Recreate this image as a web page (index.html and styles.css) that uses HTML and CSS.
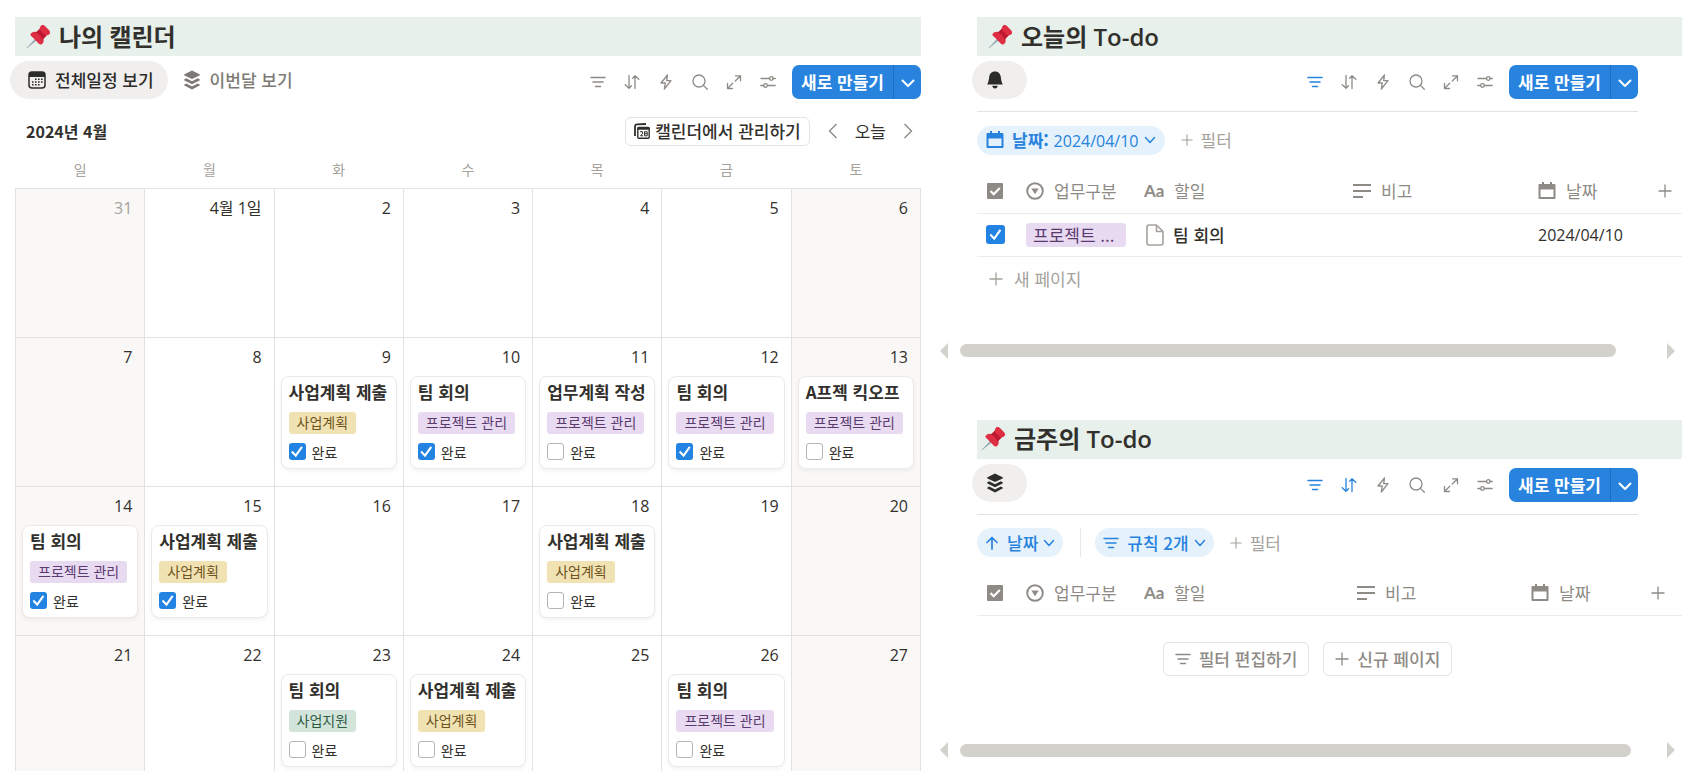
FILE: index.html
```html
<!doctype html>
<html lang="ko">
  <head>
    <meta charset="utf-8">
    <title>나의 캘린더</title>
    <meta name="viewport" content="width=device-width, initial-scale=1">
    <link rel="stylesheet" href="styles.css">
  </head>
  <body>
    <svg class="sprite" xmlns="http://www.w3.org/2000/svg">
      <symbol id="pin" viewBox="0 0 36 36">
        <path fill="#99aab5" d="M16.5 17.5l3.500 2.500L2.500 34 0.500 35.500l1.300-2.200z" />
        <path fill="#dd2e44" d="M21.500 3.500c1.800-4 5-3.500 7.500-1l5 5c2.500 2.500 2.700 6-1 7.500l-5.500 1.500 -8-7.500z" />
        <path fill="#dd2e44" d="M7 13c2.500-3.500 7-4 11-1.500l7 7c2.500 4 2 8.500-1.500 10.500-1.500.8-3 .2-4.500-1.300L8.300 17C6.800 15.500 6.200 14.200 7 13z" />
        <path fill="#be1931" d="M14.500 11.200l6.500-6 10 10.500-6 6.300c-1.500-4.500-5.500-9-10.500-10.800z" />
        <path fill="#dd2e44" d="M20.500 5.500l2-4.500c1.500-1.500 4-.8 6 1l5.500 5.500c2 2 2.500 4.500 1 6l-4.500 2c-4-1.500-8-5.500-10-10z" />
      </symbol>
      <symbol id="calendar-dots" viewBox="0 0 18 18">
        <rect x="1" y="1" width="16" height="16" rx="3" fill="none" stroke="currentColor" stroke-width="1.500" />
        <path fill="currentColor" d="M1 6V3.500A2.800 2.800 0 013.800 1h10.400A2.800 2.800 0 0117 3.500V6z" />
        <path stroke="currentColor" stroke-width="1.600" d="M7 8.200h1.600M10 8.200h1.600M13 8.200h1.600M4 11h1.600M7 11h1.600M10 11h1.600M13 11h1.600M4 13.800h1.600M7 13.800h1.600M10 13.800h1.600" />
      </symbol>
      <symbol id="layers" viewBox="0 0 18 20" fill="currentColor">
        <path d="M9 .5l7.500 3.700c.5.300.5.900 0 1.200L9 9 1.500 5.400c-.5-.3-.5-.9 0-1.200z" />
        <path d="M3.200 8.300L9 11.200l5.800-2.900 1.700.9c.5.300.5.900 0 1.200L9 14.200l-7.500-3.800c-.5-.3-.5-.9 0-1.200z" />
        <path d="M3.200 13.500L9 16.400l5.800-2.900 1.700.9c.5.300.5.900 0 1.200L9 19.400l-7.500-3.800c-.5-.3-.5-.9 0-1.200z" />
      </symbol>
      <symbol id="bell" viewBox="0 0 18 18" fill="currentColor">
        <path d="M9 .5c3.800 0 5.500 2.500 5.800 5.500.3 3.300 1 5.500 2 7.500H1.200c1-2 1.700-4.200 2-7.500C3.500 3 5.200.5 9 .5z" />
        <path d="M6.300 14.800h5.400C11.500 16.700 10.500 17.500 9 17.500s-2.500-.8-2.700-2.700z" />
      </symbol>
      <symbol id="filter" viewBox="0 0 16 16" fill="none" stroke="currentColor" stroke-width="1.500" stroke-linecap="round">
        <path d="M1 3.500h14M3 8h10M5.500 12.500h5" />
      </symbol>
      <symbol id="sort" viewBox="0 0 16 16" fill="none" stroke="currentColor" stroke-width="1.300" stroke-linecap="round" stroke-linejoin="round">
        <path d="M5 1.500v12.500M1.200 10.800L5 14.200l2.500-2.400M11 14.500V2M8.500 4.400L11 1.800l3.800 3.400" />
      </symbol>
      <symbol id="bolt" viewBox="0 0 16 16" fill="none" stroke="currentColor" stroke-width="1.300" stroke-linejoin="round">
        <path d="M9.500 1L3 9h4.300L6.300 15 13 6.700H8.700z" />
      </symbol>
      <symbol id="search" viewBox="0 0 16 16" fill="none" stroke="currentColor" stroke-width="1.300" stroke-linecap="round">
        <circle cx="7" cy="7" r="6" />
        <path d="M11.400 11.400L15.300 15.300" />
      </symbol>
      <symbol id="expand" viewBox="0 0 16 16" fill="none" stroke="currentColor" stroke-width="1.300" stroke-linecap="round" stroke-linejoin="round">
        <path d="M9.500 1.800h5v5M14.500 1.800L9.300 7M6.500 14.500h-5v-5M1.500 14.500L6.700 9.300" />
      </symbol>
      <symbol id="sliders" viewBox="0 0 16 16" fill="none" stroke="currentColor" stroke-width="1.300" stroke-linecap="round">
        <path d="M1 4.500h8.500M13 4.500h2.200M.8 11.500H3.500M7.500 11.500h7.700" />
        <circle cx="11.300" cy="4.500" r="1.800" />
        <circle cx="5.500" cy="11.500" r="1.800" />
      </symbol>
      <symbol id="chevron" viewBox="0 0 14 14" fill="none" stroke="currentColor" stroke-width="2" stroke-linecap="round" stroke-linejoin="round">
        <path d="M1.500 5.500L7 11l5.500-5.500" />
      </symbol>
      <symbol id="chevron-thin" viewBox="0 0 12 12" fill="none" stroke="currentColor" stroke-width="1.500" stroke-linecap="round" stroke-linejoin="round">
        <path d="M1.500 3.500L6 8.500l4.500-5" />
      </symbol>
      <symbol id="prev" viewBox="0 0 10 16" fill="none" stroke="currentColor" stroke-width="1.400">
        <path d="M8.500 1L1.500 8l7 7" />
      </symbol>
      <symbol id="next" viewBox="0 0 10 16" fill="none" stroke="currentColor" stroke-width="1.400">
        <path d="M1.500 1l7 7-7 7" />
      </symbol>
      <symbol id="calendar-stack" viewBox="0 0 16 16" fill="none" stroke="currentColor">
        <path stroke-width="1.800" d="M1 13V3a2 2 0 012-1.600L12 1" />
        <rect x="3.800" y="4.500" width="11.400" height="10.700" rx="1" stroke-width="1.400" />
        <path stroke-width="2.500" d="M3.500 5.500h12" />
        <path stroke-width="1" d="M6 8.700h2.500v2L6.500 12.800H9M10.500 8.700h2.700v4.100h-2.700zM10.500 10.700h2.700" />
      </symbol>
      <symbol id="calendar" viewBox="0 0 18 18" fill="currentColor">
        <path fill-rule="evenodd" d="M4 0h2v2h6V0h2v2h2.500a1 1 0 011 1v13a1 1 0 01-1 1h-15a1 1 0 01-1-1V3a1 1 0 011-1H4zM2.500 7.500V15h13V7.500z" />
      </symbol>
      <symbol id="plus" viewBox="0 0 14 14" fill="none" stroke="currentColor" stroke-width="1.300" stroke-linecap="round">
        <path d="M7 1v12M1 7h12" />
      </symbol>
      <symbol id="checkbox" viewBox="0 0 18 18">
        <rect x="1" y="1" width="16" height="16" rx="1" fill="currentColor" />
        <path fill="none" stroke="#fff" stroke-width="2.200" d="M4.500 9l3.200 3.200L13.800 6" />
      </symbol>
      <symbol id="select" viewBox="0 0 18 18">
        <circle cx="9" cy="9" r="7.800" fill="none" stroke="currentColor" stroke-width="1.900" />
        <path fill="currentColor" d="M5.300 6.500h7.400L9 12.300z" />
      </symbol>
      <symbol id="lines" viewBox="0 0 18 18" stroke="currentColor" stroke-width="2">
        <path d="M0 3h18M0 9h18M0 15h10" />
      </symbol>
      <symbol id="page" viewBox="0 0 18 22" fill="none" stroke="currentColor" stroke-width="1.600" stroke-linejoin="round">
        <path d="M3 1h7.500L17 7.500V19a2 2 0 01-2 2H3a2 2 0 01-2-2V3a2 2 0 012-2zM10.500 1v6.500H17" />
      </symbol>
      <symbol id="arrow-up" viewBox="0 0 14 14" fill="none" stroke="currentColor" stroke-width="1.700" stroke-linecap="round" stroke-linejoin="round">
        <path d="M7 13V1.500M2 6.500l5-5 5 5" />
      </symbol>
    </svg>

    <main class="board">
      <section class="column">
        <h2 class="title"><svg class="pin"><use href="#pin" /></svg>나의 캘린더</h2>
        <div class="toolbar">
          <div class="tabs">
            <button class="tab active"><svg class="icon-18"><use href="#calendar-dots" /></svg>전체일정 보기</button>
            <button class="tab"><svg class="icon-20"><use href="#layers" /></svg>이번달 보기</button>
          </div>
          <div class="tools">
            <button class="tool" aria-label="필터"><svg><use href="#filter" /></svg></button>
            <button class="tool" aria-label="정렬"><svg><use href="#sort" /></svg></button>
            <button class="tool" aria-label="자동화"><svg><use href="#bolt" /></svg></button>
            <button class="tool" aria-label="검색"><svg><use href="#search" /></svg></button>
            <button class="tool" aria-label="확장"><svg><use href="#expand" /></svg></button>
            <button class="tool" aria-label="설정"><svg><use href="#sliders" /></svg></button>
            <div class="new">
              <button class="new-main">새로 만들기</button>
              <button class="new-more" aria-label="더 보기"><svg><use href="#chevron" /></svg></button>
            </div>
          </div>
        </div>

        <div class="month">
          <h3>2024년 4월</h3>
          <button class="outline"><svg class="icon-16"><use href="#calendar-stack" /></svg>캘린더에서 관리하기</button>
          <button class="nav" aria-label="이전 달"><svg><use href="#prev" /></svg></button>
          <button class="today">오늘</button>
          <button class="nav" aria-label="다음 달"><svg><use href="#next" /></svg></button>
        </div>

        <table class="calendar">
          <thead>
            <tr><th>일</th><th>월</th><th>화</th><th>수</th><th>목</th><th>금</th><th>토</th></tr>
          </thead>
          <tbody>
            <tr>
              <td class="off"><time class="muted">31</time></td>
              <td><time>4월 1일</time></td>
              <td><time>2</time></td>
              <td><time>3</time></td>
              <td><time>4</time></td>
              <td><time>5</time></td>
              <td class="off"><time>6</time></td>
            </tr>
            <tr>
              <td class="off"><time>7</time></td>
              <td><time>8</time></td>
              <td>
                <time>9</time>
                <article class="card">
                  <h4>사업계획 제출</h4>
                  <span class="tag yellow">사업계획</span>
                  <label><input type="checkbox" checked>완료</label>
                </article>
              </td>
              <td>
                <time>10</time>
                <article class="card">
                  <h4>팀 회의</h4>
                  <span class="tag purple">프로젝트 관리</span>
                  <label><input type="checkbox" checked>완료</label>
                </article>
              </td>
              <td>
                <time>11</time>
                <article class="card">
                  <h4>업무계획 작성</h4>
                  <span class="tag purple">프로젝트 관리</span>
                  <label><input type="checkbox">완료</label>
                </article>
              </td>
              <td>
                <time>12</time>
                <article class="card">
                  <h4>팀 회의</h4>
                  <span class="tag purple">프로젝트 관리</span>
                  <label><input type="checkbox" checked>완료</label>
                </article>
              </td>
              <td class="off">
                <time>13</time>
                <article class="card">
                  <h4>A프젝 킥오프</h4>
                  <span class="tag purple">프로젝트 관리</span>
                  <label><input type="checkbox">완료</label>
                </article>
              </td>
            </tr>
            <tr>
              <td class="off">
                <time>14</time>
                <article class="card">
                  <h4>팀 회의</h4>
                  <span class="tag purple">프로젝트 관리</span>
                  <label><input type="checkbox" checked>완료</label>
                </article>
              </td>
              <td>
                <time>15</time>
                <article class="card">
                  <h4>사업계획 제출</h4>
                  <span class="tag yellow">사업계획</span>
                  <label><input type="checkbox" checked>완료</label>
                </article>
              </td>
              <td><time>16</time></td>
              <td><time>17</time></td>
              <td>
                <time>18</time>
                <article class="card">
                  <h4>사업계획 제출</h4>
                  <span class="tag yellow">사업계획</span>
                  <label><input type="checkbox">완료</label>
                </article>
              </td>
              <td><time>19</time></td>
              <td class="off"><time>20</time></td>
            </tr>
            <tr>
              <td class="off"><time>21</time></td>
              <td><time>22</time></td>
              <td>
                <time>23</time>
                <article class="card">
                  <h4>팀 회의</h4>
                  <span class="tag green">사업지원</span>
                  <label><input type="checkbox">완료</label>
                </article>
              </td>
              <td>
                <time>24</time>
                <article class="card">
                  <h4>사업계획 제출</h4>
                  <span class="tag yellow">사업계획</span>
                  <label><input type="checkbox">완료</label>
                </article>
              </td>
              <td><time>25</time></td>
              <td>
                <time>26</time>
                <article class="card">
                  <h4>팀 회의</h4>
                  <span class="tag purple">프로젝트 관리</span>
                  <label><input type="checkbox">완료</label>
                </article>
              </td>
              <td class="off"><time>27</time></td>
            </tr>
          </tbody>
        </table>
      </section>

      <div class="column">
        <section class="todo">
          <h2 class="title"><svg class="pin"><use href="#pin" /></svg>오늘의 To-do</h2>
          <div class="toolbar lined">
            <div class="tabs">
              <button class="tab active only-icon" aria-label="오늘"><svg class="icon-18"><use href="#bell" /></svg></button>
            </div>
            <div class="tools">
              <button class="tool on" aria-label="필터"><svg><use href="#filter" /></svg></button>
              <button class="tool" aria-label="정렬"><svg><use href="#sort" /></svg></button>
              <button class="tool" aria-label="자동화"><svg><use href="#bolt" /></svg></button>
              <button class="tool" aria-label="검색"><svg><use href="#search" /></svg></button>
              <button class="tool" aria-label="확장"><svg><use href="#expand" /></svg></button>
              <button class="tool" aria-label="설정"><svg><use href="#sliders" /></svg></button>
              <div class="new">
                <button class="new-main">새로 만들기</button>
                <button class="new-more" aria-label="더 보기"><svg><use href="#chevron" /></svg></button>
              </div>
            </div>
          </div>
          <div class="filters">
            <button class="pill"><svg class="icon-18"><use href="#calendar" /></svg><span><b>날짜:</b> <span class="num">2024/04/10</span></span><svg class="icon-12"><use href="#chevron-thin" /></svg></button>
            <button class="add"><svg class="icon-12"><use href="#plus" /></svg>필터</button>
          </div>
          <table class="list">
            <colgroup><col class="c-check"><col class="c-kind"><col><col class="c-note"><col class="c-date"><col class="c-plus"></colgroup>
            <thead>
              <tr>
                <th><div class="cell"><svg class="icon-18"><use href="#checkbox" /></svg></div></th>
                <th><div class="cell"><svg class="icon-18"><use href="#select" /></svg>업무구분</div></th>
                <th><div class="cell"><span class="aa">Aa</span>할일</div></th>
                <th><div class="cell"><svg class="icon-18"><use href="#lines" /></svg>비고</div></th>
                <th><div class="cell"><svg class="icon-18"><use href="#calendar" /></svg>날짜</div></th>
                <th><div class="cell"><svg class="icon-14"><use href="#plus" /></svg></div></th>
              </tr>
            </thead>
            <tbody>
              <tr>
                <td><div class="cell"><input type="checkbox" aria-label="완료" checked></div></td>
                <td><div class="cell"><span class="tag purple large">프로젝트 ...</span></div></td>
                <td><div class="cell name"><svg class="page"><use href="#page" /></svg>팀 회의</div></td>
                <td></td>
                <td><div class="cell num">2024/04/10</div></td>
                <td></td>
              </tr>
            </tbody>
          </table>
          <button class="add-row"><svg class="icon-14"><use href="#plus" /></svg>새 페이지</button>
          <div class="scroll first"><i class="left"></i><i class="thumb"></i><i class="right"></i></div>
        </section>

        <section class="todo">
          <h2 class="title tight"><svg class="pin"><use href="#pin" /></svg>금주의 To-do</h2>
          <div class="toolbar lined">
            <div class="tabs">
              <button class="tab active only-icon" aria-label="금주"><svg class="icon-20"><use href="#layers" /></svg></button>
            </div>
            <div class="tools">
              <button class="tool on" aria-label="필터"><svg><use href="#filter" /></svg></button>
              <button class="tool on" aria-label="정렬"><svg><use href="#sort" /></svg></button>
              <button class="tool" aria-label="자동화"><svg><use href="#bolt" /></svg></button>
              <button class="tool" aria-label="검색"><svg><use href="#search" /></svg></button>
              <button class="tool" aria-label="확장"><svg><use href="#expand" /></svg></button>
              <button class="tool" aria-label="설정"><svg><use href="#sliders" /></svg></button>
              <div class="new">
                <button class="new-main">새로 만들기</button>
                <button class="new-more" aria-label="더 보기"><svg><use href="#chevron" /></svg></button>
              </div>
            </div>
          </div>
          <div class="filters">
            <button class="pill compact"><svg class="icon-14"><use href="#arrow-up" /></svg>날짜<svg class="icon-12"><use href="#chevron-thin" /></svg></button>
            <span class="divider"></span>
            <button class="pill compact"><svg class="icon-16"><use href="#filter" /></svg>규칙 2개<svg class="icon-12"><use href="#chevron-thin" /></svg></button>
            <button class="add"><svg class="icon-12"><use href="#plus" /></svg>필터</button>
          </div>
          <table class="list week">
            <colgroup><col class="c-check"><col class="c-kind"><col><col class="c-note"><col class="c-date"><col class="c-plus"></colgroup>
            <thead>
              <tr>
                <th><div class="cell"><svg class="icon-18"><use href="#checkbox" /></svg></div></th>
                <th><div class="cell"><svg class="icon-18"><use href="#select" /></svg>업무구분</div></th>
                <th><div class="cell"><span class="aa">Aa</span>할일</div></th>
                <th><div class="cell"><svg class="icon-18"><use href="#lines" /></svg>비고</div></th>
                <th><div class="cell"><svg class="icon-18"><use href="#calendar" /></svg>날짜</div></th>
                <th><div class="cell"><svg class="icon-14"><use href="#plus" /></svg></div></th>
              </tr>
            </thead>
          </table>
          <div class="empty">
            <button class="outline tall"><svg class="icon-16"><use href="#filter" /></svg>필터 편집하기</button>
            <button class="outline tall"><svg class="icon-14"><use href="#plus" /></svg>신규 페이지</button>
          </div>
          <div class="scroll second"><i class="left"></i><i class="thumb"></i><i class="right"></i></div>
        </section>
      </div>
    </main>
  </body>
</html>
```

FILE: styles.css
```css
* {
  margin: 0;
  padding: 0;
  box-sizing: border-box;
}

html, body {
  height: 100%;
  overflow: hidden;
}

body {
  color: #32302c;
  background: #fff;
  font-family: "Noto Sans CJK KR", sans-serif;
  font-size: 17px;
  line-height: 24px;
}

button {
  display: flex;
  align-items: center;

  border: none;
  background: none;
  color: inherit;
  font: inherit;
  white-space: nowrap;
  cursor: pointer;
}

svg {
  display: block;
  flex: none;
}

.sprite {
  position: absolute;
  width: 0;
  height: 0;
}

.icon-12 { width: 12px; height: 12px; }
.icon-14 { width: 14px; height: 14px; }
.icon-16 { width: 16px; height: 16px; }
.icon-18 { width: 18px; height: 18px; }
.icon-20 { width: 18px; height: 20px; }

.num, time {
  font-family: "Open Sans", "Noto Sans CJK KR", sans-serif;
  font-size: 16px;
}

.board {
  display: grid;
  grid-template-columns: minmax(0, 906fr) minmax(0, 705fr);
  gap: 56px;
  padding: 17px 19px 0 15px;
}

/* section titles */

.title {
  display: flex;
  align-items: center;
  gap: 9px;
  height: 39px;
  padding-left: 11px;

  background: #e7f0ea;
  font-family: "Open Sans", "Noto Sans CJK KR", sans-serif;
  font-size: 24px;
  font-weight: 600;
}

.title.tight {
  padding-left: 4px;
}

.pin {
  width: 24px;
  height: 24px;
}

/* view tabs and tools */

.toolbar {
  display: flex;
  align-items: center;
  justify-content: space-between;
  height: 55px;
  padding-bottom: 7px;
}

.toolbar.lined {
  margin-right: 44px;
  border-bottom: 1px solid #e3e2e0;
  height: 56px;
}

.tabs {
  display: flex;
  margin-left: -5px;
}

.tab {
  gap: 9px;
  height: 38px;
  padding: 0 14px 0 18px;
  border-radius: 19px;

  color: #7d7a75;
  font-weight: 500;
}

.tab + .tab {
  padding-left: 15px;
}

.tab.active {
  background: #f0efed;
  color: #2c2c2b;
}

.tab.only-icon {
  width: 55px;
  padding: 0 14px;
}

.tools {
  display: flex;
  align-items: center;
  margin-top: 4px;
}

.tool {
  justify-content: center;
  width: 34px;
  height: 34px;
  color: #8e8b86;
}

.tool svg {
  width: 16px;
  height: 16px;
}

.tool.on {
  color: #2783de;
}

.new {
  display: flex;
  height: 34px;
  margin-left: 7px;
  border-radius: 7px;
  overflow: hidden;

  background: #2783de;
  color: #fff;
  font-weight: 600;
}

.new-main {
  padding: 0 9px;
}

.new-more {
  justify-content: center;
  width: 28px;
  border-left: 1px solid #1f6fc0;
}

.new-more svg {
  width: 14px;
  height: 14px;
}

/* month calendar */

.month {
  display: flex;
  align-items: center;
  height: 43px;
  padding-bottom: 3px;
}

.month h3 {
  flex: 1;
  padding-left: 11px;
  font-size: 16px;
  font-weight: 600;
}

.outline {
  gap: 5px;
  height: 29px;
  padding: 0 8px;
  border: 1px solid #e3e2e0;
  border-radius: 6px;
  font-weight: 500;
}

.nav {
  justify-content: center;
  width: 27px;
  height: 29px;
  color: #8e8b86;
}

.nav svg {
  width: 10px;
  height: 16px;
}

.month .outline {
  margin-right: 10px;
}

.today {
  padding: 0 8px;
}

.calendar {
  width: 100%;
  table-layout: fixed;
  border-collapse: collapse;
}

.calendar th {
  height: 34px;
  padding-bottom: 3px;

  color: #a5a29c;
  font-size: 14px;
  font-weight: 400;
}

.calendar td {
  height: 149px;
  padding: 7px 6px 0;
  border: 1px solid #e3e2e0;
  vertical-align: top;
}

.calendar .off {
  background: #f9f8f7;
}

time {
  display: block;
  padding-right: 6px;
  text-align: right;
}

.muted {
  color: #a5a29c;
}

.card {
  display: flex;
  flex-direction: column;
  align-items: flex-start;

  height: 93px;
  margin-top: 7px;
  padding: 3px 0 0 7px;
  border: 1px solid #ebeae8;
  border-radius: 8px;

  background: #fff;
  box-shadow: 0 2px 4px rgba(0, 0, 0, 0.05);
}

.card h4 {
  font-size: 17px;
  font-weight: 600;
  white-space: nowrap;
}

.card label {
  display: flex;
  align-items: center;
  gap: 6px;
  margin-top: 6px;
  font-size: 14px;
}

.tag {
  height: 22px;
  margin-top: 8px;
  padding: 0 8px;
  border-radius: 3px;

  font-size: 14px;
  line-height: 21px;
  white-space: nowrap;
}

.tag.large {
  width: 100px;
  height: 24px;
  margin: 0;
  padding: 0 7px;
  font-size: 17px;
  line-height: 24px;
}

.purple { background: #e8daf1; color: #5b3a70; }
.yellow { background: #f1e2b4; color: #6e5420; }
.green { background: #d3e5db; color: #2f5c45; }

input[type="checkbox"] {
  appearance: none;
  display: grid;
  place-content: center;

  width: 17px;
  height: 17px;
  border: 1px solid #b7b5b0;
  border-radius: 3px;
}

input[type="checkbox"]:checked {
  border: none;
  background: #2383e2;
}

input[type="checkbox"]:checked::before {
  content: "";
  width: 12px;
  height: 12px;
  background: #fff;
  clip-path: polygon(0 56%, 12% 44%, 38% 70%, 84% 6%, 98% 16%, 40% 98%);
}

.list input[type="checkbox"] {
  width: 19px;
  height: 19px;
}

/* filters */

.filters {
  display: flex;
  align-items: center;
  height: 57px;
  padding-bottom: 1px;
}

.pill {
  gap: 8px;
  height: 29px;
  padding: 0 9px;
  border-radius: 15px;

  background: #e5f2fb;
  color: #2783de;
}

.pill b {
  font-weight: 600;
}

.pill .icon-12 {
  margin-left: -3px;
}

.pill.compact {
  padding: 0 8px;
  font-weight: 500;
}

.add {
  gap: 8px;
  margin-left: 16px;
  color: #a5a29c;
}

.divider {
  width: 1px;
  height: 29px;
  margin: 0 14px 0 17px;
  background: #e9e8e6;
}

/* to-do tables */

.list {
  width: 100%;
  table-layout: fixed;
  border-collapse: collapse;
}

.list th, .list td {
  height: 44px;
  padding: 0;
  border-bottom: 1px solid #ecebe9;

  font-weight: 400;
  text-align: left;
}

.list td {
  height: 43px;
}

.list th {
  color: #8e8b86;
}

.c-check { width: 40px; }
.c-kind { width: 118px; }
.c-note { width: 185px; }
.c-date { width: 120px; }
.c-plus { width: 33px; }

.week .c-note { width: 174px; }
.week .c-plus { width: 40px; }

.cell {
  display: flex;
  align-items: center;
  gap: 10px;
  padding-left: 9px;
  white-space: nowrap;
}

.cell .aa {
  width: 20px;
  font-family: Lato, sans-serif;
  font-weight: 700;
}

.cell.name {
  gap: 9px;
  padding-left: 11px;
  font-weight: 500;
}

.page {
  width: 18px;
  height: 22px;
  color: #a5a29c;
}

.add-row {
  gap: 11px;
  height: 44px;
  padding-left: 12px;
  color: #a5a29c;
}

.empty {
  display: flex;
  justify-content: center;
  gap: 14px;
  margin: 26px 44px 0 0;
}

.outline.tall {
  gap: 8px;
  height: 34px;
  padding: 0 11px;
  color: #8e8b86;
}

/* horizontal scrollbars */

.scroll {
  display: flex;
  align-items: center;
  height: 16px;
  margin: 42px 7px 0 -37px;
}

.scroll.first {
  margin-bottom: 61px;
}

.scroll.second {
  margin-top: 66px;
}

.left, .right {
  border: 8px solid transparent;
}

.left {
  border-left: none;
  border-right-color: #d3d1cb;
}

.right {
  border-right: none;
  border-left-color: #d3d1cb;
}

.thumb {
  flex: 1;
  height: 13px;
  margin: 0 51px 0 12px;
  border-radius: 7px;
  background: #d3d1cb;
}

.second .thumb {
  margin-right: 36px;
}
```
